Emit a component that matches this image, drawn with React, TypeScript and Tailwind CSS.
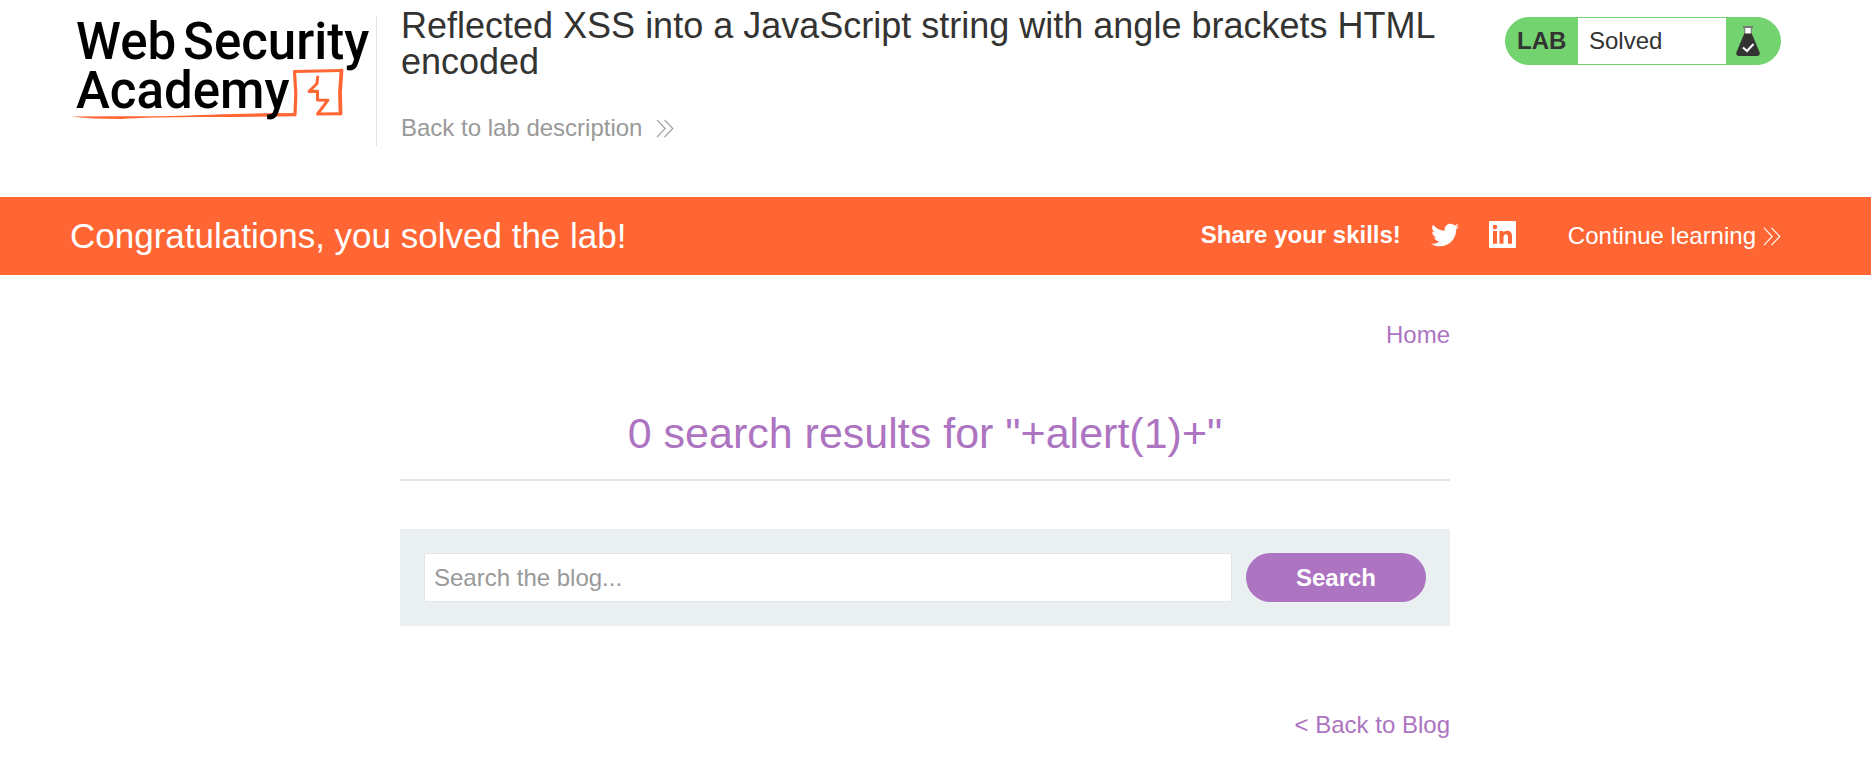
import { FaTwitter } from "react-icons/fa";

function Chevrons() {
  return (
    <svg width="18" height="19" viewBox="0 0 18 19" fill="none" stroke="currentColor" strokeWidth="1.1" aria-hidden="true">
      <path d="M1 0.8L9.2 9.5L1 18.2M8.5 0.8L16.8 9.5L8.5 18.2" />
    </svg>
  );
}

function LinkedIn() {
  return (
    <svg width="27" height="27" viewBox="0 0 27 27" fill="currentColor" aria-hidden="true">
      <path
        fillRule="evenodd"
        d="M1 0H26Q27 0 27 1V26Q27 27 26 27H1Q0 27 0 26V1Q0 0 1 0ZM4 10V22.700H8V10ZM6 3.800A2.300 2.300 0 1 0 6 8.400A2.300 2.300 0 1 0 6 3.800ZM10.500 10V22.700H14.500V16.400C14.500 14.500 15.200 13.200 17 13.200C18.700 13.200 19 14.700 19 16.500V22.700H23V15.700C23 12.200 22 9.700 18.200 9.700C16.300 9.700 15 10.600 14.400 11.700V10Z"
      />
    </svg>
  );
}

function Logo() {
  return (
    <svg width="300" height="112" viewBox="0 0 300 112" className="shrink-0 overflow-visible" role="img" aria-label="Web Security Academy">
      <path d="M-0.500 100.500Q30 100 60 100.200T140 98.700T224 97V100.300Q180 101 130 101T50 103Q20 103 -0.500 100.500Z" fill="#ff6633" />
      <g fill="none" stroke="#ff6633" strokeLinejoin="round" strokeLinecap="round">
        <path d="M224 98.700L224.800 78L223.500 55.500L270.500 54.500" strokeWidth="3.200" />
        <path d="M270.500 54.500L269 76L269.500 97.500" strokeWidth="3.800" />
        <path d="M246.700 61L246 67.500L238 75.500L246.500 75.300V84L257 84.200L246.500 98L269 97.800" strokeWidth="3" />
      </g>
      <g fill="#000" fontFamily="Roboto, sans-serif" fontWeight="500">
        <text x="5" y="43" fontSize="51">Web</text>
        <text x="112" y="43" fontSize="51">Security</text>
        <text x="5" y="92" fontSize="51">Academy</text>
      </g>
    </svg>
  );
}

function Flask() {
  return (
    <svg width="24" height="30" viewBox="0 0 24 30" aria-hidden="true">
      <path d="M9 1.500H15V9H9Z" fill="#fff" />
      <path d="M7 0H17V2H15.700V8H14.700V2H9.300V8H8.300V2H7Z" fill="#777" />
      <path d="M8.300 7.500H15.700L23.500 26Q24.500 30 21 30H3Q-0.500 30 0.500 26Z" fill="#333332" />
      <path d="M7 21.500L11 25L17.500 18" fill="none" stroke="#fff" strokeWidth="2" />
    </svg>
  );
}

export default function App() {
  return (
    <div className="bg-white text-2xl leading-7 text-[#333332] font-['Liberation_Sans',Arial,sans-serif]">
      <header className="flex items-start pt-2 pr-[90px] pb-[51px] pl-[71px]">
        <div className="mt-2 mr-6 h-[130px] shrink-0 border-r border-[#e5e5e5] pr-[5px]">
          <Logo />
        </div>
        <div className="min-w-0 grow">
          <h2 className="text-4xl leading-9">Reflected XSS into a JavaScript string with angle brackets HTML encoded</h2>
          <a href="#lab" className="mt-[34px] inline-flex items-center gap-[14px] text-[#999999]">
            Back to lab description
            <Chevrons />
          </a>
        </div>
        <div className="mt-[9px] ml-12 flex h-12 w-[276px] shrink-0 items-stretch overflow-hidden rounded-3xl border border-[#72d36f] bg-[#72d36f]">
          <p className="flex w-[72px] items-center pl-[11px] font-bold">LAB</p>
          <p className="flex grow items-center bg-white pl-[11px]">Solved</p>
          <span className="flex w-[54px] items-center pl-[10px]">
            <Flask />
          </span>
        </div>
      </header>

      <section className="flex h-[78px] items-center bg-[#ff6633] pr-[90px] pl-[70px] text-white">
        <h4 className="grow text-[35px] leading-10">Congratulations, you solved the lab!</h4>
        <div className="mr-[52px] flex items-center pb-[3px]">
          <span className="mr-[30px] font-bold">Share your skills!</span>
          <a href="#twitter" aria-label="Twitter" className="mr-[30px] text-[28px]">
            <FaTwitter />
          </a>
          <a href="#linkedin" aria-label="LinkedIn">
            <LinkedIn />
          </a>
        </div>
        <a href="#learn" className="flex items-center gap-[7px]">
          Continue learning
          <Chevrons />
        </a>
      </section>

      <main className="pt-[46px] pr-[21px]">
        <div className="mx-auto max-w-[1050px]">
          <nav className="flex justify-end text-[#ad74c1]">
            <a href="#home">Home</a>
          </nav>
          <h1 className="mt-[63px] border-b-2 border-[#e5e5e5] pb-[25px] text-center text-[43px] leading-[42px] text-[#ad74c1]">
            0 search results for "+alert(1)+"
          </h1>
          <form className="mt-12 flex items-center gap-[14px] bg-[#eaeff2] p-6" onSubmit={(e) => e.preventDefault()}>
            <input
              type="text"
              aria-label="Search the blog"
              placeholder="Search the blog..."
              className="h-[49px] min-w-0 grow border border-[#e5e5e5] bg-white px-[9px] placeholder:text-[#999999]"
            />
            <button type="submit" className="h-[49px] w-[180px] rounded-full bg-[#ad74c1] font-bold text-white">
              Search
            </button>
          </form>
          <div className="mt-[85px] flex justify-end pb-7 text-[#ad74c1]">
            <a href="#blog">&lt; Back to Blog</a>
          </div>
        </div>
      </main>
    </div>
  );
}
